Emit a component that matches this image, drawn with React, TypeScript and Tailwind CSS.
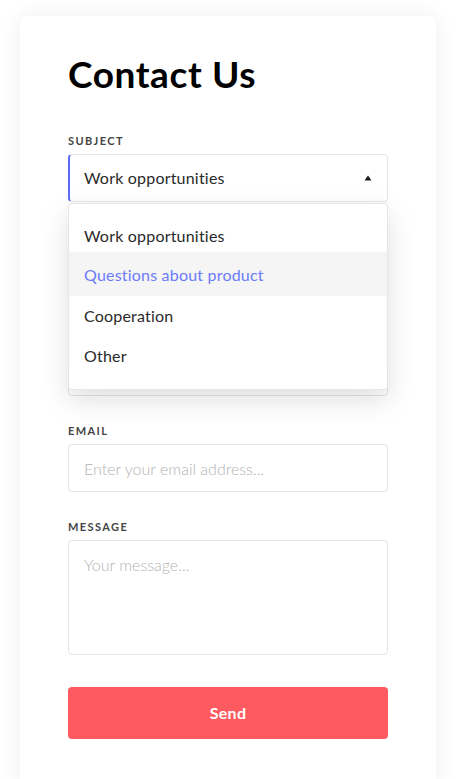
import React from "react";

const font = { fontFamily: "Lato, 'Open Sans', sans-serif" };

function Label({ children }: { children?: React.ReactNode }) {
  return (
    <div className="mb-[6px] h-[14px] text-[11px] font-bold leading-[14px] tracking-[1.4px] text-[#444]">
      {children}
    </div>
  );
}

export default function App() {
  const options = ["Work opportunities", "Questions about product", "Cooperation", "Other"];
  return (
    <div className="min-h-screen bg-white px-[20px] pt-[16px]" style={font}>
      <div className="rounded-[8px] bg-white px-[48px] pb-[48px] pt-[36px] shadow-[0_0_22px_rgba(0,0,0,0.07)]">
        <h1 className="mb-[39px] text-[37px] font-bold leading-[43px] tracking-[0.6px] text-black">Contact Us</h1>

        <div className="relative z-10">
          <Label>SUBJECT</Label>
          <div className="flex h-[48px] items-center justify-between rounded-[4px] border border-[#e6e6e6] border-l-2 border-l-[#5b6cf8] bg-white pl-[14px] pr-[15px]">
            <span className="text-[16px] tracking-[0.2px] text-[#2a2a2a]">Work opportunities</span>
            <svg width="8" height="6" viewBox="0 0 8 6">
              <path d="M4 0.5 L7.5 5.5 L0.5 5.5 Z" fill="#1a1a1a" />
            </svg>
          </div>
          <div className="absolute left-0 right-0 top-full mt-px rounded-[4px] border border-[#e6e6e6] bg-white pb-[13px] pt-[12px] shadow-[0_10px_28px_rgba(0,0,0,0.13)]">
            {options.map((o, i) =>
              i === 1 ? (
                <div
                  key={o}
                  className="relative -mt-[4px] flex h-[44px] items-center bg-[#f5f5f5] pl-[15px] pt-[2px] text-[16px] tracking-[0.2px] text-[#6b7bfa]"
                >
                  {o}
                </div>
              ) : (
                <div key={o} className="relative flex h-[40px] items-center pl-[15px] text-[16px] tracking-[0.2px] text-[#2a2a2a]">
                  {o}
                </div>
              )
            )}
          </div>
        </div>

        <div className="mt-[29px]">
          <Label />
          <div className="h-[48px] w-full rounded-[4px] border border-[#e6e6e6]" />
        </div>

        <div className="mt-[29px]">
          <Label />
          <div className="h-[48px] w-full rounded-[4px] border border-[#e6e6e6]" />
        </div>

        <div className="mt-[28px]">
          <Label>EMAIL</Label>
          <input
            className="h-[48px] w-full rounded-[4px] border border-[#e6e6e6] px-[15px] text-[16px] font-light outline-none placeholder:text-[#b3b3b3]"
            placeholder="Enter your email address..."
          />
        </div>

        <div className="mt-[28px]">
          <Label>MESSAGE</Label>
          <textarea
            className="block h-[115px] w-full resize-none rounded-[4px] border border-[#e6e6e6] px-[15px] pt-[12px] text-[16px] font-light leading-[24px] outline-none placeholder:text-[#b3b3b3]"
            placeholder="Your message..."
          />
        </div>

        <button className="mt-[32px] flex h-[52px] w-full items-center justify-center rounded-[4px] bg-[#ff5a5f] text-[16px] font-bold tracking-[0.3px] text-white">
          Send
        </button>
      </div>
    </div>
  );
}
